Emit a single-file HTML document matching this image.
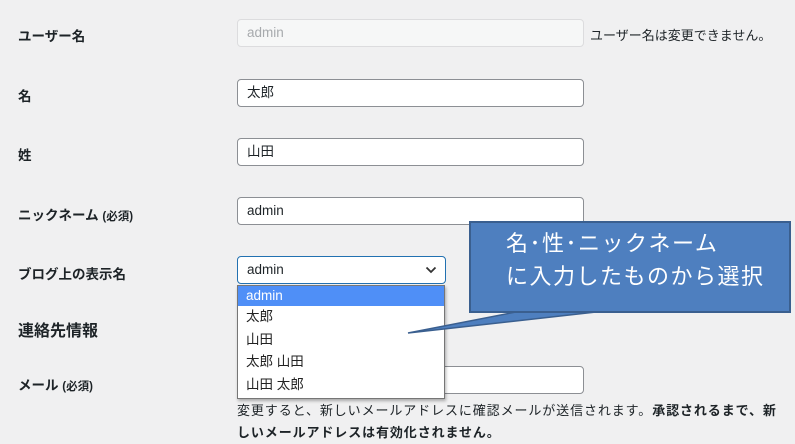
<!DOCTYPE html>
<html><head><meta charset="utf-8"><style>
body{margin:0;width:795px;height:442px;background:#f0f0f1;font-family:"Liberation Sans","Noto Sans CJK JP",sans-serif;color:#1d2327;position:relative;overflow:hidden;font-size:13px}
.l{position:absolute;left:18px;font-weight:bold;font-size:13.5px}
.l small{font-size:11.5px}
.i{position:absolute;left:237px;border:1px solid #8c8f94;border-radius:4px;background:#fff;font-size:13.5px;line-height:26px;padding-left:9px;box-sizing:border-box;height:28px;width:347px}
.dd{position:absolute;left:237px;top:285px;width:208px;height:114px;background:#fff;border:1px solid #767676;box-sizing:border-box;box-shadow:1px 2px 3px rgba(0,0,0,.3)}
.dd div{height:22.5px;line-height:22px;padding-left:8px;font-size:13.5px;color:#222}
.call{position:absolute;left:469px;top:221px;width:322px;height:92px;background:#4e7fbf;border:2px solid #3a5f8f;box-sizing:border-box;color:#fff;font-size:22px;line-height:33px;padding:4px 0 0 35px;letter-spacing:1.5px;white-space:nowrap}
</style></head><body>
<div class="l" style="top:25px">ユーザー名</div>
<div class="i" style="top:19px;background:#f6f7f7;border-color:#dcdcde;color:#a7aaad">admin</div>
<div style="position:absolute;left:590px;top:25px;font-size:13px">ユーザー名は変更できません。</div>
<div class="l" style="top:85px">名</div>
<div class="i" style="top:79px">太郎</div>
<div class="l" style="top:144px">姓</div>
<div class="i" style="top:138px">山田</div>
<div class="l" style="top:204px">ニックネーム <small>(必須)</small></div>
<div class="i" style="top:197px">admin</div>
<div class="l" style="top:263px">ブログ上の表示名</div>
<div class="i" style="top:256px;width:209px;border-color:#2271b1">admin
<svg style="position:absolute;right:8px;top:9px" width="12" height="8" viewBox="0 0 12 8"><path d="M1.5 1.5L6 6L10.5 1.5" stroke="#333" stroke-width="1.8" fill="none"/></svg></div>
<div class="l" style="top:317px;font-size:16px">連絡先情報</div>
<div class="l" style="top:374px">メール <small>(必須)</small></div>
<div class="i" style="top:366px">&nbsp;</div>
<div style="position:absolute;left:237px;top:400px;font-size:13px;letter-spacing:0.9px;line-height:22px;width:552px">変更すると、新しいメールアドレスに確認メールが送信されます。<b>承認されるまで、新しいメールアドレスは有効化されません。</b></div>
<div class="dd"><div style="background:#4f8ff7;color:#fff;height:20px;line-height:20px">admin</div><div>太郎</div><div>山田</div><div>太郎 山田</div><div>山田 太郎</div></div>
<svg style="position:absolute;left:0;top:0" width="795" height="442"><polygon points="521,311 408,333 605,311" fill="#4e7fbf" stroke="#3a5f8f" stroke-width="1.5"/></svg>
<div class="call">名･性･ニックネーム<br>に入力したものから選択</div>
</body></html>
